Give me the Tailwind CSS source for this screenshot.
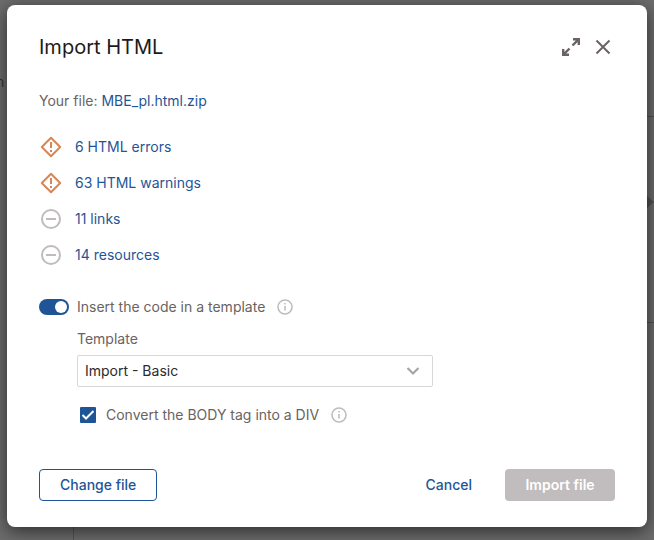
<!DOCTYPE html>
<html lang="en">
<head>
  <meta charset="UTF-8" />
  <meta name="viewport" content="width=device-width, initial-scale=1.0" />
  <title>Import HTML</title>
  <script src="https://cdn.jsdelivr.net/npm/@tailwindcss/browser@4"></script>
</head>
<body class="relative min-h-screen overflow-hidden bg-[#6c6c6c] font-['Inter','Liberation_Sans',sans-serif] text-sm text-[#6a6361]">
  <!-- Dimmed page behind the dialog -->
  <div aria-hidden="true" class="absolute inset-0">
    <span class="absolute top-[72px] -left-1 text-[#333]">n</span>
    <div class="absolute bottom-0 left-[73px] h-4 w-px bg-[#555]"></div>
    <div class="absolute top-[116px] right-0 h-px w-2 bg-[#505050]"></div>
    <div class="absolute top-[322px] right-0 h-px w-2 bg-[#505050]"></div>
    <svg class="absolute top-[195px] right-0" width="8" height="14" viewBox="0 0 8 14"><path d="M0 0L8 7L0 14Z" fill="#525252" /></svg>
  </div>

  <div role="dialog" aria-labelledby="dialog-title" class="relative mx-[7px] mt-[5px] rounded-lg bg-white px-8 pt-7 pb-[26px] shadow-[0_4px_18px_rgba(0,0,0,0.6)]">
    <header class="flex items-center justify-between">
      <h1 id="dialog-title" class="text-xl leading-7 text-[#1b1b1b]">Import HTML</h1>
      <div class="flex gap-2 text-[#6a6361]">
        <button type="button" aria-label="Expand" class="size-6">
          <svg width="24" height="24" viewBox="0 0 24 24" fill="none" stroke="currentColor" stroke-width="2.4">
            <path d="M14 4.2H19.8V10M19.8 4.2L13.5 10.5M4.2 14V19.8H10M4.2 19.8L10.5 13.5" />
          </svg>
        </button>
        <button type="button" aria-label="Close" class="size-6">
          <svg width="24" height="24" viewBox="0 0 24 24" fill="none" stroke="currentColor" stroke-width="2">
            <path d="M5.5 5.5L18.5 18.5M18.5 5.5L5.5 18.5" />
          </svg>
        </button>
      </div>
    </header>

    <p class="mt-[30px] leading-5">Your file: <a href="#" class="text-[#1f5597]">MBE_pl.html.zip</a></p>

    <ul class="mt-[18px] text-[#1f5597]">
      <li class="flex h-9 items-center gap-3">
        <svg class="text-[#d98655]" width="24" height="24" viewBox="0 0 24 24" fill="none" stroke="currentColor" stroke-width="2">
          <path d="M12 2.8L21.2 12L12 21.2L2.8 12Z" stroke-linejoin="round" /><path d="M12 7V13M12 15V17" />
        </svg>
        <a href="#">6 HTML errors</a>
      </li>
      <li class="flex h-9 items-center gap-3">
        <svg class="text-[#d98655]" width="24" height="24" viewBox="0 0 24 24" fill="none" stroke="currentColor" stroke-width="2">
          <path d="M12 2.8L21.2 12L12 21.2L2.8 12Z" stroke-linejoin="round" /><path d="M12 7V13M12 15V17" />
        </svg>
        <a href="#">63 HTML warnings</a>
      </li>
      <li class="flex h-9 items-center gap-3">
        <svg class="text-[#c0bcbc]" width="24" height="24" viewBox="0 0 24 24" fill="none" stroke="currentColor" stroke-width="2">
          <circle cx="12" cy="12" r="9" /><path d="M7 12H17" />
        </svg>
        <a href="#">11 links</a>
      </li>
      <li class="flex h-9 items-center gap-3">
        <svg class="text-[#c0bcbc]" width="24" height="24" viewBox="0 0 24 24" fill="none" stroke="currentColor" stroke-width="2">
          <circle cx="12" cy="12" r="9" /><path d="M7 12H17" />
        </svg>
        <a href="#">14 resources</a>
      </li>
    </ul>

    <div class="mt-6 flex items-center">
      <label class="flex cursor-pointer items-center gap-2 leading-5">
        <input type="checkbox" role="switch" checked class="peer sr-only" />
        <span class="flex h-4 w-[30px] items-center justify-end rounded-full bg-[#1f5597] px-0.5"><span class="size-3 rounded-full bg-white"></span></span>
        Insert the code in a template
      </label>
      <svg class="ml-3 text-[#c0bcbc]" width="16" height="16" viewBox="0 0 16 16" fill="none" stroke="currentColor" stroke-width="1.6">
        <circle cx="8" cy="8" r="7" /><path d="M8 7V11.5M8 4V5.6" />
      </svg>
    </div>

    <div class="mt-3 ml-[38px]">
      <label for="template" class="block leading-5">Template</label>
      <div class="relative mt-1.5 max-w-[356px]">
        <select id="template" class="h-8 w-full appearance-none rounded-xs border border-[#d8d6d6] bg-white px-[7px] text-[#2b2b2b]">
          <option>Import - Basic</option>
        </select>
        <svg class="pointer-events-none absolute top-1/2 right-3 -translate-y-1/2 text-[#a8a4a4]" width="16" height="16" viewBox="0 0 16 16" fill="none" stroke="currentColor" stroke-width="2.2">
          <path d="M2.5 5L8 10.5L13.5 5" />
        </svg>
      </div>

      <div class="mt-[18px] ml-[3px] flex items-center">
        <span class="relative size-4">
          <input id="convert-body" type="checkbox" checked class="block size-4 appearance-none rounded-[1px] bg-[#1f5597]" />
          <svg class="pointer-events-none absolute inset-0" width="16" height="16" viewBox="0 0 16 16" fill="none" stroke="white" stroke-width="2">
            <path d="M2.5 8L6 11.5L13.5 4" />
          </svg>
        </span>
        <label for="convert-body" class="ml-2.5 leading-5">Convert the BODY tag into a DIV</label>
        <svg class="ml-3 text-[#c0bcbc]" width="16" height="16" viewBox="0 0 16 16" fill="none" stroke="currentColor" stroke-width="1.6">
          <circle cx="8" cy="8" r="7" /><path d="M8 7V11.5M8 4V5.6" />
        </svg>
      </div>
    </div>

    <footer class="mt-11 flex items-center">
      <button type="button" class="h-8 rounded-sm border border-[#1f5597] px-5 font-medium text-[#1f5597]">Change file</button>
      <button type="button" class="ml-auto h-8 px-2 font-medium text-[#1f5597]">Cancel</button>
      <button type="button" disabled class="ml-[25px] h-8 min-w-[110px] rounded-sm bg-[#c1bcbd] px-5 font-semibold text-white">Import file</button>
    </footer>
  </div>
</body>
</html>
